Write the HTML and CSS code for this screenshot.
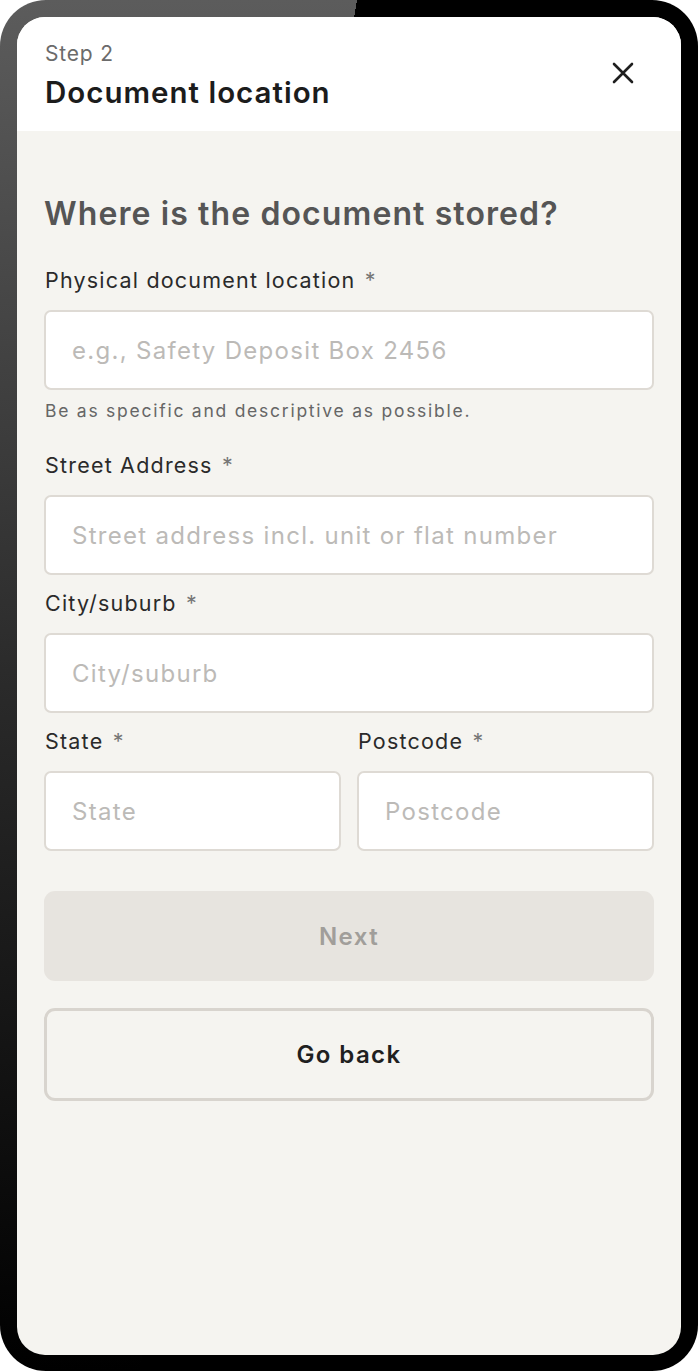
FILE: index.html
```html
<!DOCTYPE html>
<html lang="en">
<head>
<meta charset="utf-8">
<title>Document location</title>
<link rel="stylesheet" href="styles.css">
</head>
<body>
<div class="device">
  <div class="screen">
    <header class="header">
      <div class="header-text">
        <div class="step">Step 2</div>
        <h1 class="title">Document location</h1>
      </div>
      <button class="close" aria-label="Close">
        <svg width="22" height="22" viewBox="0 0 22 22" fill="none" stroke="#1f1f1f" stroke-width="2.6" stroke-linecap="round"><path d="M2 2 L20 20 M20 2 L2 20"/></svg>
      </button>
    </header>
    <main class="content">
      <h2 class="question">Where is the document stored?</h2>

      <div class="field">
        <label class="label">Physical document location <span class="req">*</span></label>
        <div class="input"><span class="ph">e.g., Safety Deposit Box 2456</span></div>
        <p class="help">Be as specific and descriptive as possible.</p>
      </div>

      <div class="field">
        <label class="label">Street Address <span class="req">*</span></label>
        <div class="input"><span class="ph">Street address incl. unit or flat number</span></div>
      </div>

      <div class="field">
        <label class="label">City/suburb <span class="req">*</span></label>
        <div class="input"><span class="ph">City/suburb</span></div>
      </div>

      <div class="row">
        <div class="field">
          <label class="label">State <span class="req">*</span></label>
          <div class="input"><span class="ph">State</span></div>
        </div>
        <div class="field">
          <label class="label">Postcode <span class="req">*</span></label>
          <div class="input"><span class="ph">Postcode</span></div>
        </div>
      </div>

      <button class="btn btn-next">Next</button>
      <button class="btn btn-back">Go back</button>
    </main>
  </div>
</div>
</body>
</html>
```

FILE: styles.css
```css
* { box-sizing: border-box; }
html, body { margin: 0; padding: 0; background: #ffffff; }
body { font-family: "Inter", "Roboto", "Liberation Sans", sans-serif; }

.device {
  width: 698px;
  height: 1371px;
  border-radius: 46px;
  padding: 17px;
  background:
    linear-gradient(99deg, transparent 0 39%, #000 39%),
    linear-gradient(to bottom, #5c5c5c 0%, #2a2a2a 50%, #000 100%);
}

.screen {
  width: 664px;
  height: 1338px;
  border-radius: 28px;
  overflow: hidden;
  background: #f5f4f0;
  display: flex;
  flex-direction: column;
}

.header {
  background: #ffffff;
  height: 114px;
  padding: 25px 27px 0 28px;
  display: flex;
  justify-content: space-between;
  align-items: flex-start;
}
.step {
  font-size: 21px;
  line-height: 24px;
  color: #6b6b6b;
  font-weight: 400;
  letter-spacing: 0.8px;
}
.title {
  margin: 8px 0 0;
  font-size: 29.5px;
  line-height: 36px;
  font-weight: 600;
  color: #1c1c1c;
  letter-spacing: 1px;
}
.close {
  border: 0;
  background: none;
  padding: 0;
  margin: 20px 20px 0 0;
  width: 22px;
  height: 22px;
  cursor: pointer;
}
.close svg { display: block; width: 22px; height: 22px; }

.content {
  padding: 63px 27px 0;
  display: flex;
  flex-direction: column;
}
.question {
  margin: 0 0 34px;
  font-size: 32px;
  line-height: 40px;
  font-weight: 600;
  color: #555555;
  letter-spacing: 1.1px;
}

.field { display: flex; flex-direction: column; margin-bottom: 16px; }
.label {
  font-size: 21.5px;
  line-height: 24px;
  color: #2a2a2a;
  margin: 0 0 18px 1px;
  letter-spacing: 1.2px;
}
.req { color: #777; margin-left: 2px; }
.input {
  height: 80px;
  background: #ffffff;
  border: 2px solid #dedad4;
  border-radius: 7px;
  display: flex;
  align-items: center;
  padding: 0 26px;
}
.ph {
  font-size: 24px;
  color: #bcbab7;
  letter-spacing: 1.3px;
}
.help {
  margin: 11px 0 16px 1px;
  font-size: 17.5px;
  line-height: 20px;
  color: #666;
  letter-spacing: 1.75px;
}

.row {
  display: grid;
  grid-template-columns: 1fr 1fr;
  gap: 16px;
}
.row .field { margin-bottom: 0; }

.btn {
  width: 100%;
  border-radius: 11px;
  font-family: inherit;
  font-size: 24px;
  font-weight: 600;
  letter-spacing: 1.4px;
  cursor: pointer;
}
.btn-next {
  margin-top: 40px;
  height: 90px;
  border: 0;
  background: #e7e4df;
  color: #a19e9a;
}
.btn-back {
  margin-top: 27px;
  height: 93px;
  border: 3px solid #d8d4ce;
  background: transparent;
  color: #1f1f1f;
}
```
